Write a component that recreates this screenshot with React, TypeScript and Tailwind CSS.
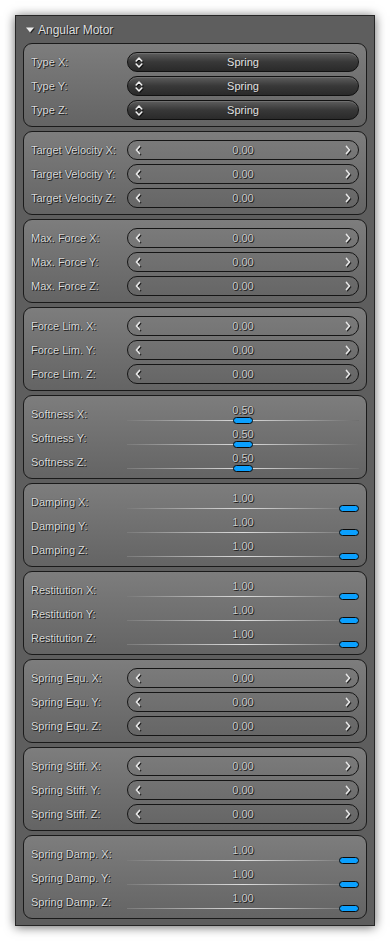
import React from 'react';

type Group =
  | { kind: 'combo'; labels: string[]; value: string }
  | { kind: 'spin'; labels: string[]; value: string }
  | { kind: 'slider'; labels: string[]; value: number };

const axes = ['X', 'Y', 'Z'];
const rowsFor = (prefix: string) => axes.map((a) => `${prefix} ${a}:`);

const groups: Group[] = [
  { kind: 'combo', labels: rowsFor('Type'), value: 'Spring' },
  { kind: 'spin', labels: rowsFor('Target Velocity'), value: '0.00' },
  { kind: 'spin', labels: rowsFor('Max. Force'), value: '0.00' },
  { kind: 'spin', labels: rowsFor('Force Lim.'), value: '0.00' },
  { kind: 'slider', labels: rowsFor('Softness'), value: 0.5 },
  { kind: 'slider', labels: rowsFor('Damping'), value: 1 },
  { kind: 'slider', labels: rowsFor('Restitution'), value: 1 },
  { kind: 'spin', labels: rowsFor('Spring Equ.'), value: '0.00' },
  { kind: 'spin', labels: rowsFor('Spring Stiff.'), value: '0.00' },
  { kind: 'slider', labels: rowsFor('Spring Damp.'), value: 1 },
];

// dark outline-ish shadow the engine editor draws under every label
const shadowText = '[text-shadow:1px_1px_0_#1e1e1e,0_0_1px_#262626]';

const UpDownIcon = () => (
  <svg width="8" height="13" viewBox="0 0 8 13" className="drop-shadow-[1px_1px_0_#111]">
    <path d="M1.2 5 L4 2 L6.8 5" fill="none" stroke="#f0f0f0" strokeWidth="1.6" strokeLinecap="round" strokeLinejoin="round" />
    <path d="M1.2 8 L4 11 L6.8 8" fill="none" stroke="#f0f0f0" strokeWidth="1.6" strokeLinecap="round" strokeLinejoin="round" />
  </svg>
);

const Chevron = ({ dir }: { dir: 'left' | 'right' }) => (
  <svg width="6" height="10" viewBox="0 0 6 10" className="drop-shadow-[1px_1px_0_#222]">
    <path
      d={dir === 'left' ? 'M4.5 1.5 L1.5 5 L4.5 8.5' : 'M1.5 1.5 L4.5 5 L1.5 8.5'}
      fill="none"
      stroke="#e6e6e6"
      strokeWidth="1.7"
      strokeLinecap="round"
      strokeLinejoin="round"
    />
  </svg>
);

const ComboBox = ({ value }: { value: string }) => (
  <div className="relative flex h-[20px] w-[232px] items-center rounded-full border border-[#111] bg-linear-to-b from-[#5e5e5e] via-[#383838] to-[#2a2a2a] shadow-[inset_0_1px_0_rgba(255,255,255,0.12)]">
    <div className="absolute left-[7px] top-[3px]">
      <UpDownIcon />
    </div>
    <span className={`w-full text-center text-[11px] text-[#e2e2e2] ${shadowText}`}>{value}</span>
  </div>
);

const SpinBox = ({ value }: { value: string }) => (
  <div className="flex h-[20px] w-[232px] items-center justify-between rounded-full border border-[#151515] px-[7px]">
    <Chevron dir="left" />
    <span className={`text-[11px] text-[#d0d0d0] ${shadowText}`}>{value}</span>
    <Chevron dir="right" />
  </div>
);

const Slider = ({ value }: { value: number }) => (
  <div className="relative h-[24px] w-[232px]">
    <div className={`absolute inset-x-0 top-0 text-center text-[11px] leading-[16px] text-[#d0d0d0] ${shadowText}`}>
      {value.toFixed(2)}
    </div>
    <div className="absolute inset-x-0 top-[18px] h-px bg-linear-to-r from-[#7a7a7a] via-[#dedede] to-[#6e6e6e]" />
    <div
      className="absolute top-[15px] h-[7px] w-[20px] rounded-full border border-[#0a0a0a] bg-[#0aa0ff]"
      style={{ left: `${value * (232 - 20)}px` }}
    />
  </div>
);

const GroupBox = ({ group }: { group: Group }) => (
  <div className="h-[84px] rounded-[9px] border border-[#1a1a1a] bg-linear-to-b from-[#7d7d7d] to-[#646464] px-[7px] pt-[6px]">
    {group.labels.map((label) => (
      <div key={label} className="flex h-[24px] items-center">
        <span className={`w-[96px] shrink-0 whitespace-nowrap text-[11px] text-[#dcdcdc] ${shadowText}`}>{label}</span>
        {group.kind === 'combo' && <ComboBox value={group.value} />}
        {group.kind === 'spin' && <SpinBox value={group.value} />}
        {group.kind === 'slider' && <Slider value={group.value} />}
      </div>
    ))}
  </div>
);

export default function App() {
  return (
    <div className="min-h-[941px] w-[391px] bg-white pl-[15px] pt-[15px] font-['Liberation_Sans',Arial,sans-serif]">
      <div className="h-[911px] w-[360px] border border-[#262626] bg-[#5e5e5e] px-[7px] shadow-[0_1px_10px_rgba(0,0,0,0.6)]">
        {/* header */}
        <div className="flex h-[27px] items-center gap-[4px] pl-[3px]">
          <svg width="8" height="6" viewBox="0 0 8 6" className="drop-shadow-[1px_1px_0_#222]">
            <path d="M0 0.5 L8 0.5 L4 5.5 Z" fill="#eeeeee" />
          </svg>
          <span className={`text-[12px] text-[#e0e0e0] ${shadowText}`}>Angular Motor</span>
        </div>
        <div className="flex flex-col gap-[4px]">
          {groups.map((g, i) => (
            <GroupBox key={i} group={g} />
          ))}
        </div>
      </div>
    </div>
  );
}
